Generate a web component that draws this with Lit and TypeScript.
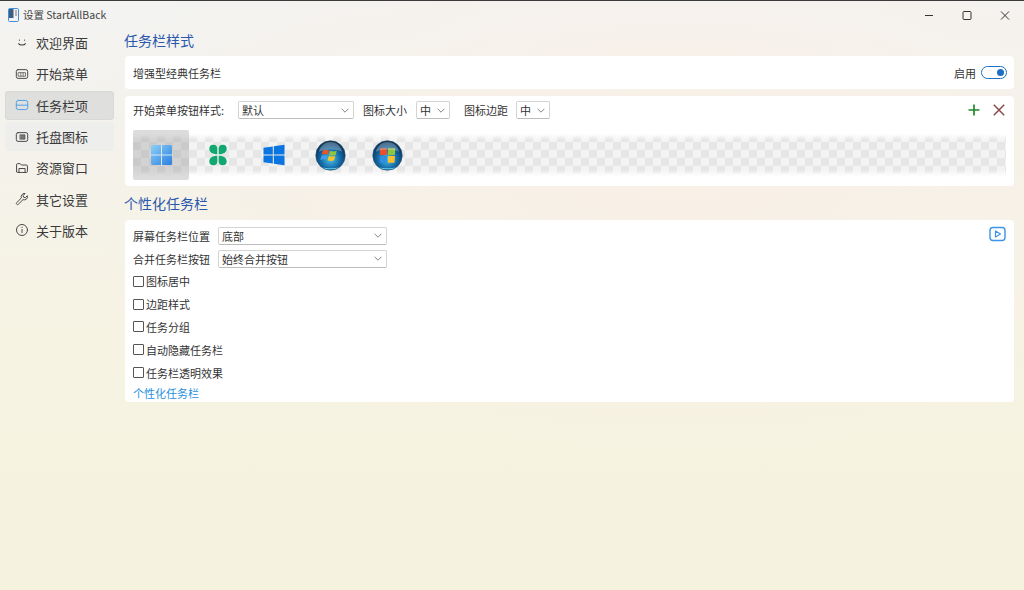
import { LitElement, html, css, svg } from 'lit';
import { customElement, state } from 'lit/decorators.js';

const stroke = (inner: unknown, color = '#444') => html`
    <svg class="nav-icon" viewBox="0 0 16 16" fill="none" stroke=${color} stroke-width="1.1" stroke-linecap="round" stroke-linejoin="round">${inner}</svg>`;

const NAV = [
    { label: '欢迎界面', icon: stroke(svg`<circle cx="5" cy="4.6" r=".7" fill="#333" stroke="none"/><circle cx="11" cy="4.6" r=".7" fill="#333" stroke="none"/><path d="M4.3 8.8c1 1.9 6.4 1.9 7.4 0" stroke-width="1.3"/>`, '#333') },
    { label: '开始菜单', icon: stroke(svg`<rect x="1.5" y="3" width="13" height="10" rx="2"/><rect x="4" y="6.5" width="8" height="4" stroke-width=".8"/><path d="M6.6 6.5v4M9.3 6.5v4" stroke-width=".7"/>`) },
    { label: '任务栏项', icon: stroke(svg`<rect x="1.5" y="2.8" width="13" height="10.4" rx="2.2"/><path d="M1.5 8.2h13"/>`, '#4a9fe8') },
    { label: '托盘图标', icon: stroke(svg`<rect x="1.5" y="3" width="13" height="10" rx="2"/><rect x="6" y="5.5" width="5.4" height="5" fill="#777" stroke-width=".7"/>`) },
    { label: '资源窗口', icon: stroke(svg`<path d="M1.8 12V4.2c0-.7.4-1.2 1.1-1.2h3l1.4 1.6h5.8c.7 0 1.1.5 1.1 1.1V12c0 .7-.4 1.1-1.1 1.1H2.9c-.7 0-1.1-.4-1.1-1.1z"/><path d="M4.5 13V8.6h7V13"/>`) },
    { label: '其它设置', icon: stroke(svg`<path d="M10.5 1.7a3.6 3.6 0 0 0-3.2 5L2 12.2c-.7.7-.5 1.4 0 1.8.5.5 1.2.6 1.8 0l5.4-5.3a3.6 3.6 0 0 0 4.9-4.4l-2.3 2.2-2-.5-.5-2 2.2-2.2c-.3 0-.6-.1-1-.1z"/>`) },
    { label: '关于版本', icon: stroke(svg`<circle cx="8" cy="8" r="6.3"/><path d="M8 7.3v3.6"/><circle cx="8" cy="5" r=".6" fill="#444" stroke="none"/>`) },
];

const orb = (id: string, flag: unknown) => svg`
    <svg class="orb" viewBox="0 0 32 32">
        <defs>
            <radialGradient id=${id} cx=".5" cy=".62" r=".6">
                <stop offset="0" stop-color="#4fc3e8"/>
                <stop offset=".55" stop-color="#136aa8"/>
                <stop offset="1" stop-color="#0c2d4e"/>
            </radialGradient>
        </defs>
        <circle cx="16" cy="16" r="15.2" fill="url(#${id})" stroke="#24506e" stroke-width=".6"/>
        ${flag}
        <path d="M4 12C6 5 11 2 16 2s10 3 12 10c-7-3-17-3-24 0z" fill="#fff" opacity=".28"/>
        <path d="M7 28c5 3 13 3 18 0-5 1.400-13 1.400-18 0z" fill="#7fe6ff" opacity=".8"/>
    </svg>`;

@customElement('app-root')
export class AppRoot extends LitElement {
    static styles = css`
        :host {
            display: block;
            width: 1024px;
            height: 590px;
            overflow: hidden;
            font-family: "Noto Sans CJK SC", "Liberation Sans", sans-serif;
            font-size: 11px;
            color: #333;
        }

        .window {
            height: 590px;
            display: flex;
            flex-direction: column;
            box-sizing: border-box;
            background:
                radial-gradient(ellipse 620px 300px at 680px 170px, #f9f0e6 0%, rgba(249, 240, 230, 0) 100%),
                linear-gradient(180deg, #f3f3f2 0%, #f4f2ec 22%, #f6f3e4 52%, #f5f3de 100%);
        }

        .titlebar {
            height: 28px;
            flex: none;
            display: flex;
            align-items: center;
            padding-left: 8px;
            font-size: 10.5px;
            color: #444;
            border-top: 1px solid #3a3a3a;
            box-sizing: border-box;
        }

        .titlebar .app-icon {
            width: 11px;
            height: 14px;
            margin-right: 4px;
        }

        .caption {
            margin-left: auto;
            display: flex;
        }

        .caption svg {
            width: 38px;
            height: 12px;
            display: block;
        }

        .body {
            flex: 1;
            display: flex;
            min-height: 0;
        }

        nav {
            width: 125px;
            flex: none;
            box-sizing: border-box;
            padding: 0 11px 0 5px;
            display: flex;
            flex-direction: column;
            gap: 2px;
        }

        .nav-item {
            height: 29.3px;
            display: flex;
            align-items: center;
            gap: 7px;
            padding-left: 10px;
            border-radius: 4px;
            font-size: 13px;
            color: #3a3a3a;
        }

        .nav-item.active { background: #dfdfde; box-shadow: inset 0 0 0 1px #d8d8d7; }
        .nav-item.hover { background: #eeeeec; }

        .nav-icon {
            width: 14px;
            height: 14px;
            flex: none;
        }

        main {
            flex: 1;
            padding-right: 10px;
            min-width: 0;
        }

        h2 {
            margin: 0;
            font-size: 14px;
            line-height: 20px;
            font-weight: 400;
            color: #2b58ab;
            margin-left: -1px;
        }

        h2.first { height: 28px; padding-top: 2px; box-sizing: border-box; }
        h2.second { height: 27px; padding-top: 7px; margin-top: 0; box-sizing: content-box; height: 20px; padding-bottom: 7px; }

        .card {
            background: #fff;
            border-radius: 4px;
            padding: 0 8px;
        }

        .card.enhanced {
            height: 33px;
            display: flex;
            align-items: center;
            justify-content: space-between;
            margin-bottom: 7px;
        }

        .toggle-wrap {
            display: flex;
            align-items: center;
            gap: 5px;
            margin-right: -1px;
        }

        .toggle {
            width: 26px;
            height: 13px;
            box-sizing: border-box;
            border: 1.5px solid #1b6fc4;
            border-radius: 7px;
            display: flex;
            align-items: center;
            justify-content: flex-end;
            padding-right: 2px;
        }

        .toggle i {
            width: 7px;
            height: 7px;
            border-radius: 50%;
            background: #1b6fc4;
        }

        .card.starts {
            height: 90px;
            margin-bottom: 0;
            position: relative;
        }

        .start-row {
            height: 26px;
            padding-top: 1px;
            display: flex;
            align-items: center;
        }

        .actions {
            margin-left: auto;
            display: flex;
            gap: 9px;
            margin-right: -1px;
        }

        .actions svg {
            width: 16px;
            height: 16px;
            display: block;
        }

        .select {
            height: 18px;
            box-sizing: border-box;
            border: 1px solid #d4d4d4;
            border-bottom-color: #bdbdbd;
            border-radius: 2px;
            display: flex;
            align-items: center;
            justify-content: space-between;
            padding: 0 3px 0 3px;
            background: #fff;
            color: #333;
        }

        .select svg {
            width: 8px;
            height: 5px;
            margin-right: 1px;
        }

        .strip-wrap {
            position: relative;
            height: 50px;
            margin-top: 7px;
            display: flex;
            align-items: center;
        }

        .strip {
            position: absolute;
            left: 0;
            right: 0;
            top: 4px;
            height: 42px;
            background-color: #fff;
            background-image:
                linear-gradient(180deg, #fff 0, rgba(255, 255, 255, 0) 6px, rgba(255, 255, 255, 0) 36px, #fff 42px),
                conic-gradient(#e6e6e6 25%, #f3f3f3 0 50%, #e6e6e6 0 75%, #f3f3f3 0);
            background-size: 100% 100%, 16px 16px;
        }

        .tiles {
            position: relative;
            display: flex;
        }

        .tile {
            width: 56.500px;
            height: 50px;
            display: flex;
            align-items: center;
            justify-content: center;
        }

        .tile.selected {
            background: rgba(130, 130, 130, 0.28);
            border-radius: 2px;
            width: 56px;
            margin-right: .5px;
        }

        .tile svg { width: 22px; height: 22px; display: block; }
        .tile svg.orb { width: 31px; height: 31px; }

        .label { white-space: nowrap; }

        .card.personal {
            height: 182px;
            box-sizing: border-box;
            padding-top: 4px;
            position: relative;
        }

        .form-row {
            height: 23px;
            display: flex;
            align-items: center;
            gap: 8px;
        }

        .check-row {
            height: 22.800px;
            display: flex;
            align-items: center;
            gap: 2px;
        }

        .check {
            width: 11px;
            height: 11px;
            box-sizing: border-box;
            border: 1px solid #555;
            border-radius: 1px;
            flex: none;
        }

        .link {
            color: #1e90e0;
            line-height: 18px;
        }

        .play {
            position: absolute;
            right: 8px;
            top: 6px;
            width: 17px;
            height: 16px;
        }
    `;

    @state()
    private active = 2;

    private chevron() {
        return html`<svg viewBox="0 0 8 5" fill="none" stroke="#777" stroke-width=".9"><path d="M.6.8 4 4.200 7.400.8"/></svg>`;
    }

    private select(value: string, width: number) {
        return html`<div class="select" style="width:${width}px"><span>${value}</span>${this.chevron()}</div>`;
    }

    private startIcons() {
        return [
            html`<svg viewBox="0 0 22 22">
                <defs>
                    <linearGradient id="w11" x1="0" y1="0" x2="1" y2="1">
                        <stop offset="0" stop-color="#8ed0f6"/>
                        <stop offset="1" stop-color="#2b7fe0"/>
                    </linearGradient>
                </defs>
                <path d="M1 2.500C1 1.700 1.700 1 2.500 1h18c.8 0 1.500.7 1.500 1.500v17c0 .8-.7 1.500-1.500 1.500h-18c-.8 0-1.500-.7-1.500-1.500z" fill="url(#w11)"/>
                <path d="M11.500 1v20M1 11h21" stroke="#d5e6f4" stroke-width="1"/>
            </svg>`,
            html`<svg viewBox="0 0 22 22" fill="#10a870">
                <path d="M10.300 10.300V4.800a4 4 0 1 0-8 0c0 3 2.500 5.500 8 5.500z"/>
                <path d="M11.700 10.300V4.800a4 4 0 1 1 8 0c0 3-2.500 5.500-8 5.500z"/>
                <path d="M10.300 11.700v5.500a4 4 0 1 1-8 0c0-3 2.500-5.500 8-5.500z"/>
                <path d="M11.700 11.700v5.500a4 4 0 1 0 8 0c0-3-2.500-5.500-8-5.500z"/>
            </svg>`,
            html`<svg viewBox="0 0 22 22" fill="#0a74e0">
                <path d="M.5 3.800 9.800 2.500v8H.5z"/>
                <path d="M10.800 2.300 21.500.8v9.700H10.800z"/>
                <path d="M.5 11.500h9.300v8L.5 18.200z"/>
                <path d="M10.800 11.500h10.700v9.700l-10.700-1.500z"/>
            </svg>`,
            orb('orb-a', svg`
                <path d="M8 11c2-1.200 4-1.200 6.500-.3L13.300 15c-2-.8-4-.8-6.300.2z" fill="#e8552a"/>
                <path d="M15.500 11c2.500 1 4.500 1 7 0l-1.200 4.400c-2.400 1-4.400 1-6.800 0z" fill="#8fc63f"/>
                <path d="M6.700 16.300c2.300-1 4.300-1 6.300-.2l-1.200 4.400c-2-.8-4-.8-6.300.2z" fill="#3f9fe8"/>
                <path d="M14.200 16.400c2.400 1 4.400 1 6.800 0l-1.200 4.400c-2.400 1-4.400 1-6.800 0z" fill="#f7c325"/>`),
            orb('orb-b', svg`
                <path d="M8.500 8.500h7v7h-7.500z" fill="#e8502a"/>
                <path d="M16.500 8.500h7.500l-.3 7h-7.200z" fill="#8cc63f"/>
                <path d="M8 16.500h7.500v7h-7z" fill="#2f8fe0"/>
                <path d="M16.500 16.500h7.200l-.5 7h-6.700z" fill="#fbc02d"/>`),
        ];
    }

    render() {
        return html`
            <div class="window">
                <div class="titlebar">
                    <svg class="app-icon" viewBox="0 0 11 14" fill="none" stroke="#3d8fe0" stroke-width="1">
                        <rect x=".5" y=".5" width="10" height="13" rx="1.200"/>
                        <rect x="1" y="1" width="4.500" height="9" fill="#3f5f80" stroke="none"/>
                        <path d="M7 3h2M7 5h2M7 7h2" stroke="#555" stroke-width=".8"/>
                    </svg>
                    <span>设置 StartAllBack</span>
                    <div class="caption">
                        <svg viewBox="0 0 38 12" fill="none" stroke="#333" stroke-width="1"><path d="M15 6.500h8"/></svg>
                        <svg viewBox="0 0 38 12" fill="none" stroke="#333" stroke-width="1"><rect x="15" y="2.500" width="8" height="8" rx="1"/></svg>
                        <svg viewBox="0 0 38 12" fill="none" stroke="#333" stroke-width="1"><path d="M15 2.500l8 8M23 2.500l-8 8"/></svg>
                    </div>
                </div>
                <div class="body">
                    <nav>
                        ${NAV.map((item, i) => html`
                            <div class="nav-item ${i === this.active ? 'active' : ''} ${i === this.active + 1 ? 'hover' : ''}">
                                ${item.icon}<span>${item.label}</span>
                            </div>
                        `)}
                    </nav>
                    <main>
                        <h2 class="first">任务栏样式</h2>
                        <div class="card enhanced">
                            <span>增强型经典任务栏</span>
                            <div class="toggle-wrap">
                                <span>启用</span>
                                <div class="toggle"><i></i></div>
                            </div>
                        </div>
                        <div class="card starts">
                            <div class="start-row">
                                <span class="label">开始菜单按钮样式:</span>
                                <span style="width:14px"></span>
                                ${this.select('默认', 116)}
                                <span style="width:9px"></span>
                                <span class="label">图标大小</span>
                                <span style="width:9px"></span>
                                ${this.select('中', 34)}
                                <span style="width:14px"></span>
                                <span class="label">图标边距</span>
                                <span style="width:8px"></span>
                                ${this.select('中', 34)}
                                <div class="actions">
                                    <svg viewBox="0 0 16 16" fill="none" stroke="#1f8a2a" stroke-width="1.700"><path d="M8 2.500v11M2.500 8h11"/></svg>
                                    <svg viewBox="0 0 16 16" fill="none" stroke="#8a4a4a" stroke-width="1.500"><path d="M2.800 2.800l10.400 10.400M13.200 2.800 2.800 13.200"/></svg>
                                </div>
                            </div>
                            <div class="strip-wrap">
                                <div class="strip"></div>
                                <div class="tiles">
                                    ${this.startIcons().map((icon, i) => html`<div class="tile ${i === 0 ? 'selected' : ''}">${icon}</div>`)}
                                </div>
                            </div>
                        </div>
                        <h2 class="second">个性化任务栏</h2>
                        <div class="card personal">
                            <div class="form-row"><span class="label">屏幕任务栏位置</span>${this.select('底部', 169)}</div>
                            <div class="form-row"><span class="label">合并任务栏按钮</span>${this.select('始终合并按钮', 169)}</div>
                            ${['图标居中', '边距样式', '任务分组', '自动隐藏任务栏', '任务栏透明效果'].map(label => html`
                                <div class="check-row"><div class="check"></div><span>${label}</span></div>
                            `)}
                            <div class="link">个性化任务栏</div>
                            <svg class="play" viewBox="0 0 17 16" fill="none" stroke="#3d94e8" stroke-width="1.400" stroke-linejoin="round">
                                <rect x="1" y="1.500" width="15" height="13" rx="3"/>
                                <path d="M6.500 5v6l5-3z" stroke-width="1.200"/>
                            </svg>
                        </div>
                    </main>
                </div>
            </div>
        `;
    }
}

declare global {
    interface HTMLElementTagNameMap {
        'app-root': AppRoot;
    }
}
